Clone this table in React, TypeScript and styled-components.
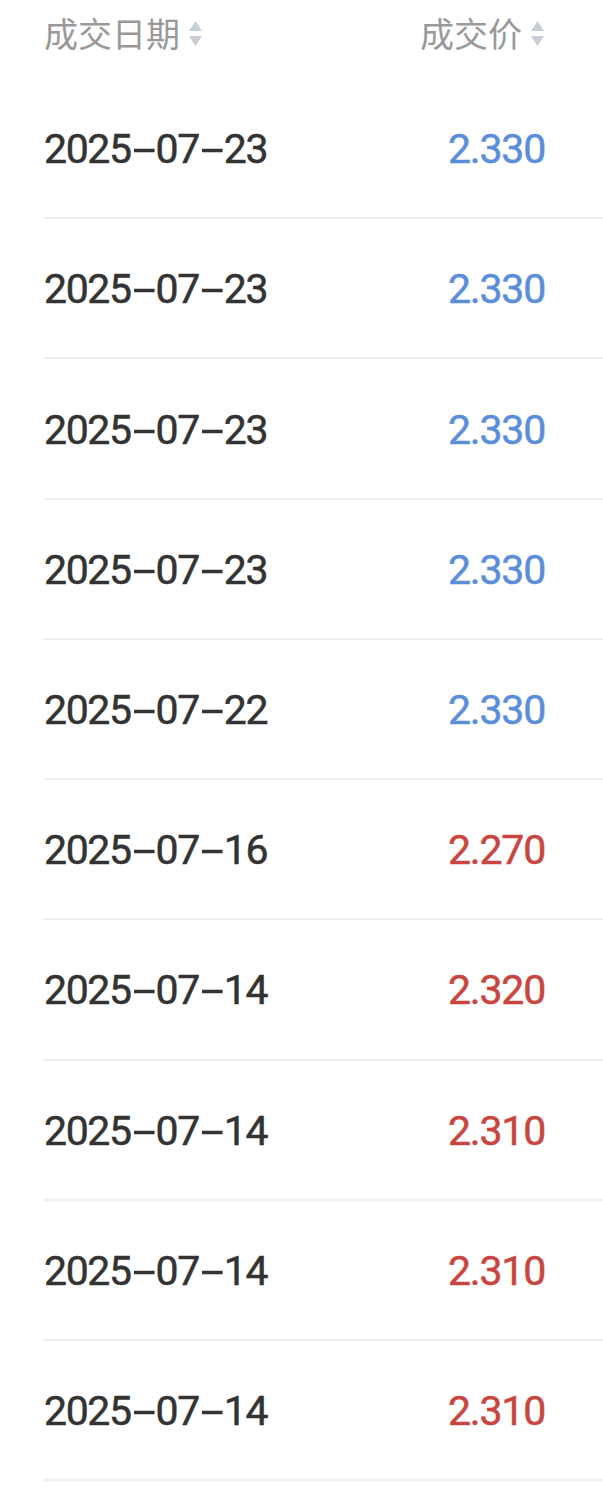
import React from "react";
import styled, { createGlobalStyle } from "styled-components";

const GlobalStyle = createGlobalStyle`
  html, body { margin: 0; padding: 0; background: #ffffff; }
  body { font-family: Roboto, "Noto Sans CJK SC", sans-serif; }
`;

const Page = styled.div`
  width: 603px;
  background: #ffffff;
`;

const HeaderRow = styled.div`
  display: flex;
  align-items: center;
  justify-content: space-between;
  height: 66px;
  margin-bottom: 13px;
  padding: 0 58px 0 44px;
`;

const HeaderCell = styled.div`
  display: flex;
  align-items: center;
  gap: 8px;
  font-family: "Noto Sans CJK SC", sans-serif;
  font-size: 34px;
  color: #999999;
  line-height: 1;
`;

const SortIcon = styled.svg`
  width: 15px;
  height: 27px;
  display: block;
`;

const Row = styled.div`
  box-sizing: border-box;
  height: 140.22px;
  margin-left: 43px;
  padding: 0 58px 0 1px;
  display: flex;
  align-items: center;
  justify-content: space-between;
  border-bottom: 2px solid #f0f0f0;
`;

const DateText = styled.span`
  font-family: Roboto, sans-serif;
  font-size: 41px;
  font-weight: 400;
  color: #333333;
  letter-spacing: -1.4px;
  padding-top: 2px;
  -webkit-text-stroke: 0.5px #333333;
`;

const Dash = styled.span`
  display: inline-block;
  margin: 0 8px 0 7px;
  transform: scaleX(2);
`;

const Price = styled.span<{ $up: boolean }>`
  font-family: Roboto, sans-serif;
  font-size: 41px;
  font-weight: 400;
  letter-spacing: -1.2px;
  color: ${(p) => (p.$up ? "#c8463f" : "#5b8ed8")};
  -webkit-text-stroke: 0.5px ${(p) => (p.$up ? "#c8463f" : "#5b8ed8")};
  padding-top: 2px;
`;

const Sort = () => (
  <SortIcon viewBox="0 0 15 27">
    <path d="M7.5 1 L14 11 L1 11 Z" fill="#c8ced5" />
    <path d="M7.5 26 L14 16 L1 16 Z" fill="#c8ced5" />
  </SortIcon>
);

const rows: { date: string; price: string; up: boolean }[] = [
  { date: "2025-07-23", price: "2.330", up: false },
  { date: "2025-07-23", price: "2.330", up: false },
  { date: "2025-07-23", price: "2.330", up: false },
  { date: "2025-07-23", price: "2.330", up: false },
  { date: "2025-07-22", price: "2.330", up: false },
  { date: "2025-07-16", price: "2.270", up: true },
  { date: "2025-07-14", price: "2.320", up: true },
  { date: "2025-07-14", price: "2.310", up: true },
  { date: "2025-07-14", price: "2.310", up: true },
  { date: "2025-07-14", price: "2.310", up: true },
];

const DateValue = ({ value }: { value: string }) => {
  const parts = value.split("-");
  return (
    <DateText>
      {parts.map((p, i) => (
        <React.Fragment key={i}>
          {i > 0 && <Dash>-</Dash>}
          {p}
        </React.Fragment>
      ))}
    </DateText>
  );
};

export default function App() {
  return (
    <Page>
      <GlobalStyle />
      <HeaderRow>
        <HeaderCell>
          成交日期
          <Sort />
        </HeaderCell>
        <HeaderCell>
          成交价
          <Sort />
        </HeaderCell>
      </HeaderRow>
      {rows.map((r, i) => (
        <Row key={i}>
          <DateValue value={r.date} />
          <Price $up={r.up}>{r.price}</Price>
        </Row>
      ))}
    </Page>
  );
}
